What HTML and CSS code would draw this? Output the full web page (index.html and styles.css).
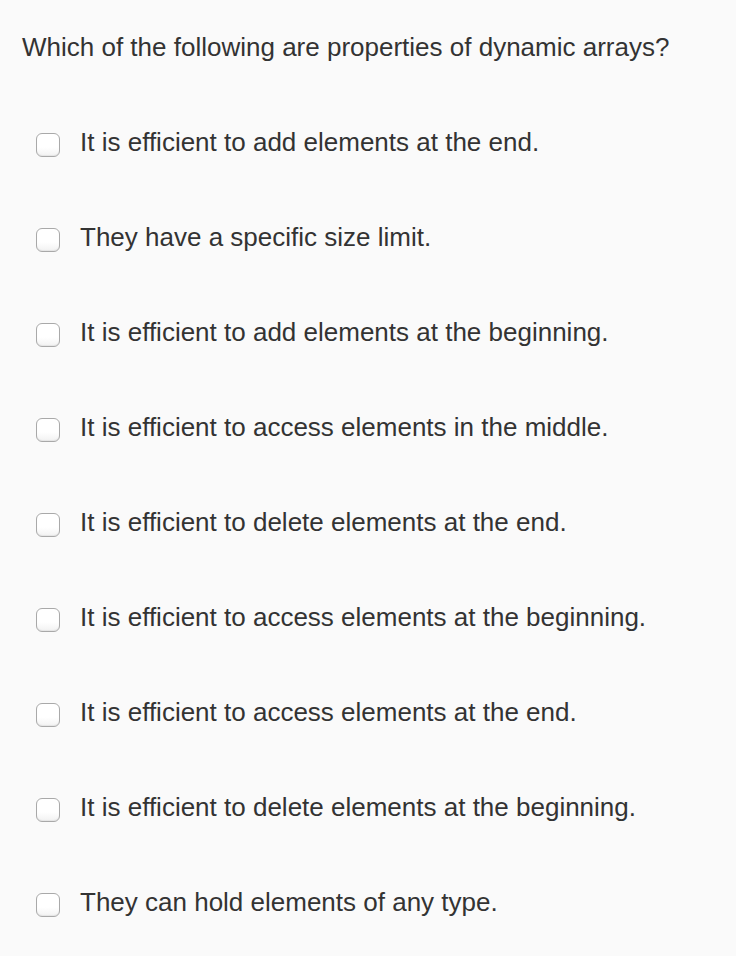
FILE: index.html
```html
<!DOCTYPE html>
<html>
<head>
<meta charset="utf-8">
<link rel="stylesheet" href="styles.css">
</head>
<body>
<div class="question">
  <p class="prompt">Which of the following are properties of dynamic arrays?</p>
  <ul class="options">
    <li class="option"><span class="box"></span><span class="label">It is efficient to add elements at the end.</span></li>
    <li class="option"><span class="box"></span><span class="label">They have a specific size limit.</span></li>
    <li class="option"><span class="box"></span><span class="label">It is efficient to add elements at the beginning.</span></li>
    <li class="option"><span class="box"></span><span class="label">It is efficient to access elements in the middle.</span></li>
    <li class="option"><span class="box"></span><span class="label">It is efficient to delete elements at the end.</span></li>
    <li class="option"><span class="box"></span><span class="label">It is efficient to access elements at the beginning.</span></li>
    <li class="option"><span class="box"></span><span class="label">It is efficient to access elements at the end.</span></li>
    <li class="option"><span class="box"></span><span class="label">It is efficient to delete elements at the beginning.</span></li>
    <li class="option"><span class="box"></span><span class="label">They can hold elements of any type.</span></li>
  </ul>
</div>
</body>
</html>
```
FILE: styles.css
```css
html, body {
  margin: 0;
  padding: 0;
  background: #fafafa;
}
body {
  font-family: "Liberation Sans", Arial, sans-serif;
  color: #333333;
}
.question {
  padding: 0 0 0 22px;
}
.prompt {
  margin: 0;
  padding-top: 31px;
  font-size: 26px;
  line-height: 32px;
}
.options {
  list-style: none;
  margin: 32px 0 0 0;
  padding: 0 0 0 14px;
}
.option {
  display: flex;
  align-items: center;
  height: 95px;
  gap: 20px;
  font-size: 26px;
}
.box {
  width: 22px;
  height: 22px;
  margin-top: 4px;
  border: 1px solid #a9a9a9;
  border-radius: 6px;
  background: linear-gradient(#ffffff 60%, #f2f2f2);
  box-shadow: inset 0 -1px 1px rgba(0, 0, 0, 0.06);
  flex: none;
}
```
